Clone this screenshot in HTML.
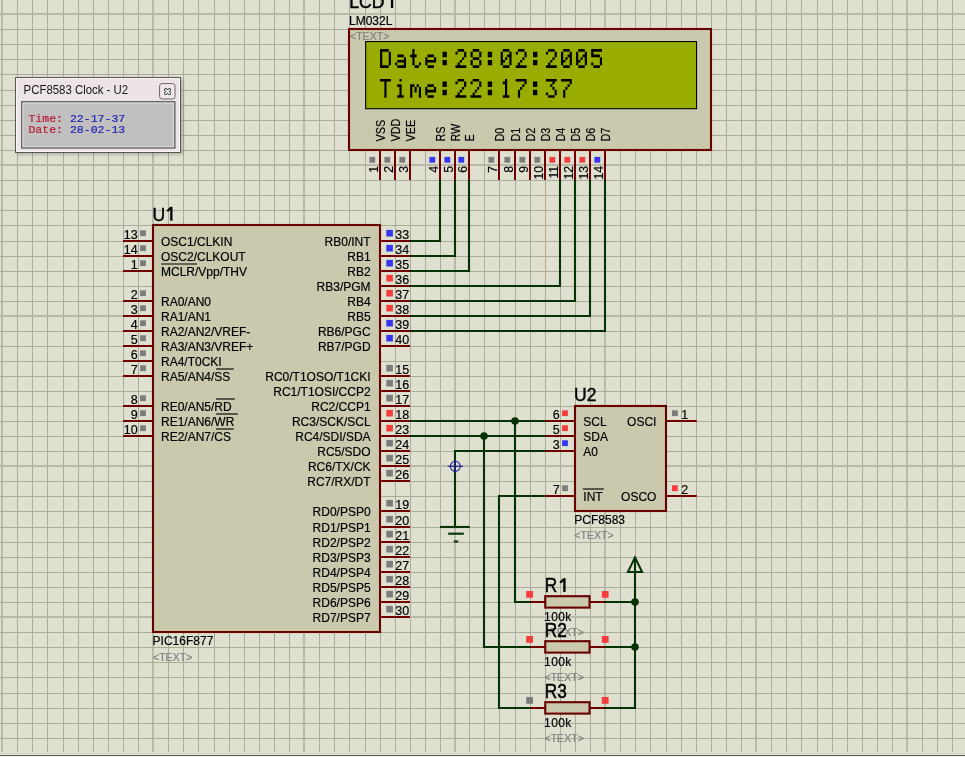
<!DOCTYPE html>
<html><head><meta charset="utf-8"><style>
html,body{margin:0;padding:0;width:965px;height:757px;overflow:hidden;background:#dfe0cf;font-family:"Liberation Sans",sans-serif;}
svg{position:absolute;left:0;top:0;will-change:transform;}
text{font-family:"Liberation Sans",sans-serif;}
</style></head><body>
<svg width="965" height="757" viewBox="0 0 965 757">
<rect x="0" y="0" width="965" height="757" fill="#dfe0cf"/>
<rect x="1" y="0" width="2" height="752" fill="#b8b9a8"/>
<rect x="17" y="0" width="1" height="752" fill="#aaab99"/>
<rect x="32" y="0" width="1" height="752" fill="#aaab99"/>
<rect x="47" y="0" width="1" height="752" fill="#aaab99"/>
<rect x="63" y="0" width="1" height="752" fill="#aaab99"/>
<rect x="78" y="0" width="1" height="752" fill="#aaab99"/>
<rect x="93" y="0" width="1" height="752" fill="#aaab99"/>
<rect x="108" y="0" width="1" height="752" fill="#aaab99"/>
<rect x="123" y="0" width="1" height="752" fill="#aaab99"/>
<rect x="138" y="0" width="1" height="752" fill="#aaab99"/>
<rect x="152" y="0" width="2" height="752" fill="#b8b9a8"/>
<rect x="168" y="0" width="1" height="752" fill="#aaab99"/>
<rect x="183" y="0" width="1" height="752" fill="#aaab99"/>
<rect x="198" y="0" width="1" height="752" fill="#aaab99"/>
<rect x="214" y="0" width="1" height="752" fill="#aaab99"/>
<rect x="229" y="0" width="1" height="752" fill="#aaab99"/>
<rect x="244" y="0" width="1" height="752" fill="#aaab99"/>
<rect x="259" y="0" width="1" height="752" fill="#aaab99"/>
<rect x="274" y="0" width="1" height="752" fill="#aaab99"/>
<rect x="289" y="0" width="1" height="752" fill="#aaab99"/>
<rect x="303" y="0" width="2" height="752" fill="#b8b9a8"/>
<rect x="319" y="0" width="1" height="752" fill="#aaab99"/>
<rect x="334" y="0" width="1" height="752" fill="#aaab99"/>
<rect x="349" y="0" width="1" height="752" fill="#aaab99"/>
<rect x="365" y="0" width="1" height="752" fill="#aaab99"/>
<rect x="380" y="0" width="1" height="752" fill="#aaab99"/>
<rect x="395" y="0" width="1" height="752" fill="#aaab99"/>
<rect x="410" y="0" width="1" height="752" fill="#aaab99"/>
<rect x="425" y="0" width="1" height="752" fill="#aaab99"/>
<rect x="440" y="0" width="1" height="752" fill="#aaab99"/>
<rect x="454" y="0" width="2" height="752" fill="#b8b9a8"/>
<rect x="469" y="0" width="1" height="752" fill="#aaab99"/>
<rect x="484" y="0" width="1" height="752" fill="#aaab99"/>
<rect x="499" y="0" width="1" height="752" fill="#aaab99"/>
<rect x="515" y="0" width="1" height="752" fill="#aaab99"/>
<rect x="530" y="0" width="1" height="752" fill="#aaab99"/>
<rect x="545" y="0" width="1" height="752" fill="#aaab99"/>
<rect x="560" y="0" width="1" height="752" fill="#aaab99"/>
<rect x="575" y="0" width="1" height="752" fill="#aaab99"/>
<rect x="590" y="0" width="1" height="752" fill="#aaab99"/>
<rect x="604" y="0" width="2" height="752" fill="#b8b9a8"/>
<rect x="620" y="0" width="1" height="752" fill="#aaab99"/>
<rect x="635" y="0" width="1" height="752" fill="#aaab99"/>
<rect x="650" y="0" width="1" height="752" fill="#aaab99"/>
<rect x="666" y="0" width="1" height="752" fill="#aaab99"/>
<rect x="681" y="0" width="1" height="752" fill="#aaab99"/>
<rect x="696" y="0" width="1" height="752" fill="#aaab99"/>
<rect x="711" y="0" width="1" height="752" fill="#aaab99"/>
<rect x="726" y="0" width="1" height="752" fill="#aaab99"/>
<rect x="741" y="0" width="1" height="752" fill="#aaab99"/>
<rect x="755" y="0" width="2" height="752" fill="#b8b9a8"/>
<rect x="771" y="0" width="1" height="752" fill="#aaab99"/>
<rect x="786" y="0" width="1" height="752" fill="#aaab99"/>
<rect x="801" y="0" width="1" height="752" fill="#aaab99"/>
<rect x="817" y="0" width="1" height="752" fill="#aaab99"/>
<rect x="832" y="0" width="1" height="752" fill="#aaab99"/>
<rect x="847" y="0" width="1" height="752" fill="#aaab99"/>
<rect x="862" y="0" width="1" height="752" fill="#aaab99"/>
<rect x="877" y="0" width="1" height="752" fill="#aaab99"/>
<rect x="892" y="0" width="1" height="752" fill="#aaab99"/>
<rect x="906" y="0" width="2" height="752" fill="#b8b9a8"/>
<rect x="922" y="0" width="1" height="752" fill="#aaab99"/>
<rect x="937" y="0" width="1" height="752" fill="#aaab99"/>
<rect x="952" y="0" width="1" height="752" fill="#aaab99"/>
<rect x="0" y="13" width="965" height="2" fill="#b8b9a8"/>
<rect x="0" y="29" width="965" height="1" fill="#aaab99"/>
<rect x="0" y="44" width="965" height="1" fill="#aaab99"/>
<rect x="0" y="59" width="965" height="1" fill="#aaab99"/>
<rect x="0" y="74" width="965" height="1" fill="#aaab99"/>
<rect x="0" y="90" width="965" height="1" fill="#aaab99"/>
<rect x="0" y="105" width="965" height="1" fill="#aaab99"/>
<rect x="0" y="120" width="965" height="1" fill="#aaab99"/>
<rect x="0" y="135" width="965" height="1" fill="#aaab99"/>
<rect x="0" y="150" width="965" height="1" fill="#aaab99"/>
<rect x="0" y="164" width="965" height="2" fill="#b8b9a8"/>
<rect x="0" y="180" width="965" height="1" fill="#aaab99"/>
<rect x="0" y="195" width="965" height="1" fill="#aaab99"/>
<rect x="0" y="210" width="965" height="1" fill="#aaab99"/>
<rect x="0" y="225" width="965" height="1" fill="#aaab99"/>
<rect x="0" y="241" width="965" height="1" fill="#aaab99"/>
<rect x="0" y="256" width="965" height="1" fill="#aaab99"/>
<rect x="0" y="271" width="965" height="1" fill="#aaab99"/>
<rect x="0" y="286" width="965" height="1" fill="#aaab99"/>
<rect x="0" y="301" width="965" height="1" fill="#aaab99"/>
<rect x="0" y="315" width="965" height="2" fill="#b8b9a8"/>
<rect x="0" y="331" width="965" height="1" fill="#aaab99"/>
<rect x="0" y="346" width="965" height="1" fill="#aaab99"/>
<rect x="0" y="361" width="965" height="1" fill="#aaab99"/>
<rect x="0" y="376" width="965" height="1" fill="#aaab99"/>
<rect x="0" y="391" width="965" height="1" fill="#aaab99"/>
<rect x="0" y="406" width="965" height="1" fill="#aaab99"/>
<rect x="0" y="421" width="965" height="1" fill="#aaab99"/>
<rect x="0" y="436" width="965" height="1" fill="#aaab99"/>
<rect x="0" y="451" width="965" height="1" fill="#aaab99"/>
<rect x="0" y="465" width="965" height="2" fill="#b8b9a8"/>
<rect x="0" y="481" width="965" height="1" fill="#aaab99"/>
<rect x="0" y="496" width="965" height="1" fill="#aaab99"/>
<rect x="0" y="511" width="965" height="1" fill="#aaab99"/>
<rect x="0" y="527" width="965" height="1" fill="#aaab99"/>
<rect x="0" y="542" width="965" height="1" fill="#aaab99"/>
<rect x="0" y="557" width="965" height="1" fill="#aaab99"/>
<rect x="0" y="572" width="965" height="1" fill="#aaab99"/>
<rect x="0" y="587" width="965" height="1" fill="#aaab99"/>
<rect x="0" y="602" width="965" height="1" fill="#aaab99"/>
<rect x="0" y="616" width="965" height="2" fill="#b8b9a8"/>
<rect x="0" y="632" width="965" height="1" fill="#aaab99"/>
<rect x="0" y="647" width="965" height="1" fill="#aaab99"/>
<rect x="0" y="662" width="965" height="1" fill="#aaab99"/>
<rect x="0" y="677" width="965" height="1" fill="#aaab99"/>
<rect x="0" y="693" width="965" height="1" fill="#aaab99"/>
<rect x="0" y="708" width="965" height="1" fill="#aaab99"/>
<rect x="0" y="723" width="965" height="1" fill="#aaab99"/>
<rect x="0" y="738" width="965" height="1" fill="#aaab99"/>
<text transform="translate(349.3,7.9)" font-size="17.6" fill="#000" text-anchor="start" stroke="#000" stroke-width="0.45">LCD</text>
<path d="M390.9 -6h2.3v13.9h-2.3z" fill="#000"/><line x1="391.4" y1="-4.4" x2="388.6" y2="-1.2" stroke="#000" stroke-width="2"/>
<text transform="translate(349,24.7)" font-size="12" fill="#000" text-anchor="start" stroke="#000" stroke-width="0.18">LM032L</text>
<rect x="349" y="29" width="362" height="121" fill="#cac9ad" stroke="#680000" stroke-width="2.1"/>
<text transform="translate(350,39.8) scale(0.92,1)" font-size="11.5" fill="#7f7f7f" text-anchor="start" stroke="#7f7f7f" stroke-width="0.18">&lt;TEXT&gt;</text>
<rect x="365.65" y="41.6" width="330.9" height="67.1" fill="#98ad00" stroke="#000" stroke-width="1.1"/>
<path fill="#000" d="M380.06 49.06h8.68v2.71h-8.68zM380.06 51.77h2.17v2.71h-2.17zM388.74 51.77h2.17v2.71h-2.17zM380.06 54.48h2.17v2.71h-2.17zM388.74 54.48h2.17v2.71h-2.17zM380.06 57.19h2.17v2.71h-2.17zM388.74 57.19h2.17v2.71h-2.17zM380.06 59.9h2.17v2.71h-2.17zM388.74 59.9h2.17v2.71h-2.17zM380.06 62.61h2.17v2.71h-2.17zM388.74 62.61h2.17v2.71h-2.17zM380.06 65.32h8.68v2.71h-8.68zM397.31 54.48h6.51v2.71h-6.51zM403.82 57.19h2.17v2.71h-2.17zM397.31 59.9h8.68v2.71h-8.68zM395.14 62.61h2.17v2.71h-2.17zM403.82 62.61h2.17v2.71h-2.17zM397.31 65.32h8.68v2.71h-8.68zM412.39 49.06h2.17v2.71h-2.17zM412.39 51.77h2.17v2.71h-2.17zM410.22 54.48h6.51v2.71h-6.51zM412.39 57.19h2.17v2.71h-2.17zM412.39 59.9h2.17v2.71h-2.17zM412.39 62.61h2.17v2.71h-2.17zM418.9 62.61h2.17v2.71h-2.17zM414.56 65.32h4.34v2.71h-4.34zM427.47 54.48h6.51v2.71h-6.51zM425.3 57.19h2.17v2.71h-2.17zM433.98 57.19h2.17v2.71h-2.17zM425.3 59.9h10.85v2.71h-10.85zM425.3 62.61h2.17v2.71h-2.17zM427.47 65.32h6.51v2.71h-6.51zM442.55 51.77h4.34v2.71h-4.34zM442.55 54.48h4.34v2.71h-4.34zM442.55 59.9h4.34v2.71h-4.34zM442.55 62.61h4.34v2.71h-4.34zM457.63 49.06h6.51v2.71h-6.51zM455.46 51.77h2.17v2.71h-2.17zM464.14 51.77h2.17v2.71h-2.17zM464.14 54.48h2.17v2.71h-2.17zM461.97 57.19h2.17v2.71h-2.17zM459.8 59.9h2.17v2.71h-2.17zM457.63 62.61h2.17v2.71h-2.17zM455.46 65.32h10.85v2.71h-10.85zM472.71 49.06h6.51v2.71h-6.51zM470.54 51.77h2.17v2.71h-2.17zM479.22 51.77h2.17v2.71h-2.17zM470.54 54.48h2.17v2.71h-2.17zM479.22 54.48h2.17v2.71h-2.17zM472.71 57.19h6.51v2.71h-6.51zM470.54 59.9h2.17v2.71h-2.17zM479.22 59.9h2.17v2.71h-2.17zM470.54 62.61h2.17v2.71h-2.17zM479.22 62.61h2.17v2.71h-2.17zM472.71 65.32h6.51v2.71h-6.51zM487.79 51.77h4.34v2.71h-4.34zM487.79 54.48h4.34v2.71h-4.34zM487.79 59.9h4.34v2.71h-4.34zM487.79 62.61h4.34v2.71h-4.34zM502.87 49.06h6.51v2.71h-6.51zM500.7 51.77h2.17v2.71h-2.17zM509.38 51.77h2.17v2.71h-2.17zM500.7 54.48h2.17v2.71h-2.17zM507.21 54.48h4.34v2.71h-4.34zM500.7 57.19h2.17v2.71h-2.17zM505.04 57.19h2.17v2.71h-2.17zM509.38 57.19h2.17v2.71h-2.17zM500.7 59.9h4.34v2.71h-4.34zM509.38 59.9h2.17v2.71h-2.17zM500.7 62.61h2.17v2.71h-2.17zM509.38 62.61h2.17v2.71h-2.17zM502.87 65.32h6.51v2.71h-6.51zM517.95 49.06h6.51v2.71h-6.51zM515.78 51.77h2.17v2.71h-2.17zM524.46 51.77h2.17v2.71h-2.17zM524.46 54.48h2.17v2.71h-2.17zM522.29 57.19h2.17v2.71h-2.17zM520.12 59.9h2.17v2.71h-2.17zM517.95 62.61h2.17v2.71h-2.17zM515.78 65.32h10.85v2.71h-10.85zM533.03 51.77h4.34v2.71h-4.34zM533.03 54.48h4.34v2.71h-4.34zM533.03 59.9h4.34v2.71h-4.34zM533.03 62.61h4.34v2.71h-4.34zM548.11 49.06h6.51v2.71h-6.51zM545.94 51.77h2.17v2.71h-2.17zM554.62 51.77h2.17v2.71h-2.17zM554.62 54.48h2.17v2.71h-2.17zM552.45 57.19h2.17v2.71h-2.17zM550.28 59.9h2.17v2.71h-2.17zM548.11 62.61h2.17v2.71h-2.17zM545.94 65.32h10.85v2.71h-10.85zM563.19 49.06h6.51v2.71h-6.51zM561.02 51.77h2.17v2.71h-2.17zM569.7 51.77h2.17v2.71h-2.17zM561.02 54.48h2.17v2.71h-2.17zM567.53 54.48h4.34v2.71h-4.34zM561.02 57.19h2.17v2.71h-2.17zM565.36 57.19h2.17v2.71h-2.17zM569.7 57.19h2.17v2.71h-2.17zM561.02 59.9h4.34v2.71h-4.34zM569.7 59.9h2.17v2.71h-2.17zM561.02 62.61h2.17v2.71h-2.17zM569.7 62.61h2.17v2.71h-2.17zM563.19 65.32h6.51v2.71h-6.51zM578.27 49.06h6.51v2.71h-6.51zM576.1 51.77h2.17v2.71h-2.17zM584.78 51.77h2.17v2.71h-2.17zM576.1 54.48h2.17v2.71h-2.17zM582.61 54.48h4.34v2.71h-4.34zM576.1 57.19h2.17v2.71h-2.17zM580.44 57.19h2.17v2.71h-2.17zM584.78 57.19h2.17v2.71h-2.17zM576.1 59.9h4.34v2.71h-4.34zM584.78 59.9h2.17v2.71h-2.17zM576.1 62.61h2.17v2.71h-2.17zM584.78 62.61h2.17v2.71h-2.17zM578.27 65.32h6.51v2.71h-6.51zM591.18 49.06h10.85v2.71h-10.85zM591.18 51.77h2.17v2.71h-2.17zM591.18 54.48h8.68v2.71h-8.68zM599.86 57.19h2.17v2.71h-2.17zM599.86 59.9h2.17v2.71h-2.17zM591.18 62.61h2.17v2.71h-2.17zM599.86 62.61h2.17v2.71h-2.17zM593.35 65.32h6.51v2.71h-6.51z"/>
<path fill="#000" d="M380.02 78.9h10.85v2.71h-10.85zM384.36 81.61h2.17v2.71h-2.17zM384.36 84.32h2.17v2.71h-2.17zM384.36 87.03h2.17v2.71h-2.17zM384.36 89.74h2.17v2.71h-2.17zM384.36 92.45h2.17v2.71h-2.17zM384.36 95.16h2.17v2.71h-2.17zM399.44 78.9h2.17v2.71h-2.17zM397.27 84.32h4.34v2.71h-4.34zM399.44 87.03h2.17v2.71h-2.17zM399.44 89.74h2.17v2.71h-2.17zM399.44 92.45h2.17v2.71h-2.17zM397.27 95.16h6.51v2.71h-6.51zM410.18 84.32h4.34v2.71h-4.34zM416.69 84.32h2.17v2.71h-2.17zM410.18 87.03h2.17v2.71h-2.17zM414.52 87.03h2.17v2.71h-2.17zM418.86 87.03h2.17v2.71h-2.17zM410.18 89.74h2.17v2.71h-2.17zM414.52 89.74h2.17v2.71h-2.17zM418.86 89.74h2.17v2.71h-2.17zM410.18 92.45h2.17v2.71h-2.17zM418.86 92.45h2.17v2.71h-2.17zM410.18 95.16h2.17v2.71h-2.17zM418.86 95.16h2.17v2.71h-2.17zM427.43 84.32h6.51v2.71h-6.51zM425.26 87.03h2.17v2.71h-2.17zM433.94 87.03h2.17v2.71h-2.17zM425.26 89.74h10.85v2.71h-10.85zM425.26 92.45h2.17v2.71h-2.17zM427.43 95.16h6.51v2.71h-6.51zM442.51 81.61h4.34v2.71h-4.34zM442.51 84.32h4.34v2.71h-4.34zM442.51 89.74h4.34v2.71h-4.34zM442.51 92.45h4.34v2.71h-4.34zM457.59 78.9h6.51v2.71h-6.51zM455.42 81.61h2.17v2.71h-2.17zM464.1 81.61h2.17v2.71h-2.17zM464.1 84.32h2.17v2.71h-2.17zM461.93 87.03h2.17v2.71h-2.17zM459.76 89.74h2.17v2.71h-2.17zM457.59 92.45h2.17v2.71h-2.17zM455.42 95.16h10.85v2.71h-10.85zM472.67 78.9h6.51v2.71h-6.51zM470.5 81.61h2.17v2.71h-2.17zM479.18 81.61h2.17v2.71h-2.17zM479.18 84.32h2.17v2.71h-2.17zM477.01 87.03h2.17v2.71h-2.17zM474.84 89.74h2.17v2.71h-2.17zM472.67 92.45h2.17v2.71h-2.17zM470.5 95.16h10.85v2.71h-10.85zM487.75 81.61h4.34v2.71h-4.34zM487.75 84.32h4.34v2.71h-4.34zM487.75 89.74h4.34v2.71h-4.34zM487.75 92.45h4.34v2.71h-4.34zM505 78.9h2.17v2.71h-2.17zM502.83 81.61h4.34v2.71h-4.34zM505 84.32h2.17v2.71h-2.17zM505 87.03h2.17v2.71h-2.17zM505 89.74h2.17v2.71h-2.17zM505 92.45h2.17v2.71h-2.17zM502.83 95.16h6.51v2.71h-6.51zM515.74 78.9h10.85v2.71h-10.85zM524.42 81.61h2.17v2.71h-2.17zM522.25 84.32h2.17v2.71h-2.17zM520.08 87.03h2.17v2.71h-2.17zM517.91 89.74h2.17v2.71h-2.17zM517.91 92.45h2.17v2.71h-2.17zM517.91 95.16h2.17v2.71h-2.17zM532.99 81.61h4.34v2.71h-4.34zM532.99 84.32h4.34v2.71h-4.34zM532.99 89.74h4.34v2.71h-4.34zM532.99 92.45h4.34v2.71h-4.34zM545.9 78.9h10.85v2.71h-10.85zM552.41 81.61h2.17v2.71h-2.17zM550.24 84.32h2.17v2.71h-2.17zM552.41 87.03h2.17v2.71h-2.17zM554.58 89.74h2.17v2.71h-2.17zM545.9 92.45h2.17v2.71h-2.17zM554.58 92.45h2.17v2.71h-2.17zM548.07 95.16h6.51v2.71h-6.51zM560.98 78.9h10.85v2.71h-10.85zM569.66 81.61h2.17v2.71h-2.17zM567.49 84.32h2.17v2.71h-2.17zM565.32 87.03h2.17v2.71h-2.17zM563.15 89.74h2.17v2.71h-2.17zM563.15 92.45h2.17v2.71h-2.17zM563.15 95.16h2.17v2.71h-2.17z"/>
<line x1="380" y1="150" x2="380" y2="180" stroke="#700000" stroke-width="2"/>
<text transform="translate(385,141.5) rotate(-90) scale(0.9,1)" font-size="12" fill="#000" text-anchor="start" stroke="#000" stroke-width="0.18">VSS</text>
<text transform="translate(378.2,165.8) rotate(-90)" font-size="12.3" fill="#000" text-anchor="end" stroke="#000" stroke-width="0.18">1</text>
<rect x="369.4" y="156.9" width="5.8" height="5.8" fill="#7c7c7c"/>
<line x1="395" y1="150" x2="395" y2="180" stroke="#700000" stroke-width="2"/>
<text transform="translate(400,141.5) rotate(-90) scale(0.9,1)" font-size="12" fill="#000" text-anchor="start" stroke="#000" stroke-width="0.18">VDD</text>
<text transform="translate(393.2,165.8) rotate(-90)" font-size="12.3" fill="#000" text-anchor="end" stroke="#000" stroke-width="0.18">2</text>
<rect x="384.4" y="156.9" width="5.8" height="5.8" fill="#7c7c7c"/>
<line x1="410" y1="150" x2="410" y2="180" stroke="#700000" stroke-width="2"/>
<text transform="translate(415,141.5) rotate(-90) scale(0.9,1)" font-size="12" fill="#000" text-anchor="start" stroke="#000" stroke-width="0.18">VEE</text>
<text transform="translate(408.2,165.8) rotate(-90)" font-size="12.3" fill="#000" text-anchor="end" stroke="#000" stroke-width="0.18">3</text>
<rect x="399.4" y="156.9" width="5.8" height="5.8" fill="#7c7c7c"/>
<line x1="440" y1="150" x2="440" y2="180" stroke="#700000" stroke-width="2"/>
<text transform="translate(445,141.5) rotate(-90) scale(0.9,1)" font-size="12" fill="#000" text-anchor="start" stroke="#000" stroke-width="0.18">RS</text>
<text transform="translate(438.2,165.8) rotate(-90)" font-size="12.3" fill="#000" text-anchor="end" stroke="#000" stroke-width="0.18">4</text>
<rect x="429.4" y="156.9" width="5.8" height="5.8" fill="#3636f0"/>
<line x1="455" y1="150" x2="455" y2="180" stroke="#700000" stroke-width="2"/>
<text transform="translate(460,141.5) rotate(-90) scale(0.9,1)" font-size="12" fill="#000" text-anchor="start" stroke="#000" stroke-width="0.18">RW</text>
<text transform="translate(453.2,165.8) rotate(-90)" font-size="12.3" fill="#000" text-anchor="end" stroke="#000" stroke-width="0.18">5</text>
<rect x="444.4" y="156.9" width="5.8" height="5.8" fill="#3636f0"/>
<line x1="469" y1="150" x2="469" y2="180" stroke="#700000" stroke-width="2"/>
<text transform="translate(474,141.5) rotate(-90) scale(0.9,1)" font-size="12" fill="#000" text-anchor="start" stroke="#000" stroke-width="0.18">E</text>
<text transform="translate(467.2,165.8) rotate(-90)" font-size="12.3" fill="#000" text-anchor="end" stroke="#000" stroke-width="0.18">6</text>
<rect x="458.4" y="156.9" width="5.8" height="5.8" fill="#3636f0"/>
<line x1="499" y1="150" x2="499" y2="180" stroke="#700000" stroke-width="2"/>
<text transform="translate(504,141.5) rotate(-90) scale(0.9,1)" font-size="12" fill="#000" text-anchor="start" stroke="#000" stroke-width="0.18">D0</text>
<text transform="translate(497.2,165.8) rotate(-90)" font-size="12.3" fill="#000" text-anchor="end" stroke="#000" stroke-width="0.18">7</text>
<rect x="488.4" y="156.9" width="5.8" height="5.8" fill="#7c7c7c"/>
<line x1="515" y1="150" x2="515" y2="180" stroke="#700000" stroke-width="2"/>
<text transform="translate(520,141.5) rotate(-90) scale(0.9,1)" font-size="12" fill="#000" text-anchor="start" stroke="#000" stroke-width="0.18">D1</text>
<text transform="translate(513.2,165.8) rotate(-90)" font-size="12.3" fill="#000" text-anchor="end" stroke="#000" stroke-width="0.18">8</text>
<rect x="504.4" y="156.9" width="5.8" height="5.8" fill="#7c7c7c"/>
<line x1="530" y1="150" x2="530" y2="180" stroke="#700000" stroke-width="2"/>
<text transform="translate(535,141.5) rotate(-90) scale(0.9,1)" font-size="12" fill="#000" text-anchor="start" stroke="#000" stroke-width="0.18">D2</text>
<text transform="translate(528.2,165.8) rotate(-90)" font-size="12.3" fill="#000" text-anchor="end" stroke="#000" stroke-width="0.18">9</text>
<rect x="519.4" y="156.9" width="5.8" height="5.8" fill="#7c7c7c"/>
<line x1="545" y1="150" x2="545" y2="180" stroke="#700000" stroke-width="2"/>
<text transform="translate(550,141.5) rotate(-90) scale(0.9,1)" font-size="12" fill="#000" text-anchor="start" stroke="#000" stroke-width="0.18">D3</text>
<text transform="translate(543.2,165.8) rotate(-90)" font-size="12.3" fill="#000" text-anchor="end" stroke="#000" stroke-width="0.18">10</text>
<rect x="534.4" y="156.9" width="5.8" height="5.8" fill="#7c7c7c"/>
<line x1="560" y1="150" x2="560" y2="180" stroke="#700000" stroke-width="2"/>
<text transform="translate(565,141.5) rotate(-90) scale(0.9,1)" font-size="12" fill="#000" text-anchor="start" stroke="#000" stroke-width="0.18">D4</text>
<text transform="translate(558.2,165.8) rotate(-90)" font-size="12.3" fill="#000" text-anchor="end" stroke="#000" stroke-width="0.18">11</text>
<rect x="549.4" y="156.9" width="5.8" height="5.8" fill="#f43c3c"/>
<line x1="575" y1="150" x2="575" y2="180" stroke="#700000" stroke-width="2"/>
<text transform="translate(580,141.5) rotate(-90) scale(0.9,1)" font-size="12" fill="#000" text-anchor="start" stroke="#000" stroke-width="0.18">D5</text>
<text transform="translate(573.2,165.8) rotate(-90)" font-size="12.3" fill="#000" text-anchor="end" stroke="#000" stroke-width="0.18">12</text>
<rect x="564.4" y="156.9" width="5.8" height="5.8" fill="#f43c3c"/>
<line x1="590" y1="150" x2="590" y2="180" stroke="#700000" stroke-width="2"/>
<text transform="translate(595,141.5) rotate(-90) scale(0.9,1)" font-size="12" fill="#000" text-anchor="start" stroke="#000" stroke-width="0.18">D6</text>
<text transform="translate(588.2,165.8) rotate(-90)" font-size="12.3" fill="#000" text-anchor="end" stroke="#000" stroke-width="0.18">13</text>
<rect x="579.4" y="156.9" width="5.8" height="5.8" fill="#f43c3c"/>
<line x1="605" y1="150" x2="605" y2="180" stroke="#700000" stroke-width="2"/>
<text transform="translate(610,141.5) rotate(-90) scale(0.9,1)" font-size="12" fill="#000" text-anchor="start" stroke="#000" stroke-width="0.18">D7</text>
<text transform="translate(603.2,165.8) rotate(-90)" font-size="12.3" fill="#000" text-anchor="end" stroke="#000" stroke-width="0.18">14</text>
<rect x="594.4" y="156.9" width="5.8" height="5.8" fill="#3636f0"/>
<text transform="translate(152.6,220.7) scale(0.95,1)" font-size="18.5" fill="#000" text-anchor="start" stroke="#000" stroke-width="0.4">U</text>
<path d="M170.2 206.8h2.3v13.9h-2.3z" fill="#000"/><line x1="170.7" y1="207.7" x2="167.3" y2="211.3" stroke="#000" stroke-width="2"/>
<rect x="153" y="225" width="227" height="407" fill="#cac9ad" stroke="#680000" stroke-width="2.1"/>
<line x1="123" y1="241" x2="153" y2="241" stroke="#700000" stroke-width="2"/>
<text transform="translate(161,245.9)" font-size="12" fill="#000" text-anchor="start" stroke="#000" stroke-width="0.18">OSC1/CLKIN</text>
<text transform="translate(137.7,239)" font-size="12.5" fill="#000" text-anchor="end" stroke="#000" stroke-width="0.18">13</text>
<rect x="140.1" y="230.3" width="5.8" height="5.8" fill="#7c7c7c"/>
<line x1="123" y1="256" x2="153" y2="256" stroke="#700000" stroke-width="2"/>
<text transform="translate(161,260.9)" font-size="12" fill="#000" text-anchor="start" stroke="#000" stroke-width="0.18">OSC2/CLKOUT</text>
<text transform="translate(137.7,254)" font-size="12.5" fill="#000" text-anchor="end" stroke="#000" stroke-width="0.18">14</text>
<rect x="140.1" y="245.3" width="5.8" height="5.8" fill="#7c7c7c"/>
<line x1="123" y1="271" x2="153" y2="271" stroke="#700000" stroke-width="2"/>
<text transform="translate(161,275.9)" font-size="12" fill="#000" text-anchor="start" stroke="#000" stroke-width="0.18">MCLR/Vpp/THV</text>
<text transform="translate(137.7,269)" font-size="12.5" fill="#000" text-anchor="end" stroke="#000" stroke-width="0.18">1</text>
<rect x="140.1" y="260.3" width="5.8" height="5.8" fill="#7c7c7c"/>
<line x1="123" y1="301" x2="153" y2="301" stroke="#700000" stroke-width="2"/>
<text transform="translate(161,305.9)" font-size="12" fill="#000" text-anchor="start" stroke="#000" stroke-width="0.18">RA0/AN0</text>
<text transform="translate(137.7,299)" font-size="12.5" fill="#000" text-anchor="end" stroke="#000" stroke-width="0.18">2</text>
<rect x="140.1" y="290.3" width="5.8" height="5.8" fill="#7c7c7c"/>
<line x1="123" y1="316" x2="153" y2="316" stroke="#700000" stroke-width="2"/>
<text transform="translate(161,320.9)" font-size="12" fill="#000" text-anchor="start" stroke="#000" stroke-width="0.18">RA1/AN1</text>
<text transform="translate(137.7,314)" font-size="12.5" fill="#000" text-anchor="end" stroke="#000" stroke-width="0.18">3</text>
<rect x="140.1" y="305.3" width="5.8" height="5.8" fill="#7c7c7c"/>
<line x1="123" y1="331" x2="153" y2="331" stroke="#700000" stroke-width="2"/>
<text transform="translate(161,335.9)" font-size="12" fill="#000" text-anchor="start" stroke="#000" stroke-width="0.18">RA2/AN2/VREF-</text>
<text transform="translate(137.7,329)" font-size="12.5" fill="#000" text-anchor="end" stroke="#000" stroke-width="0.18">4</text>
<rect x="140.1" y="320.3" width="5.8" height="5.8" fill="#7c7c7c"/>
<line x1="123" y1="346" x2="153" y2="346" stroke="#700000" stroke-width="2"/>
<text transform="translate(161,350.9)" font-size="12" fill="#000" text-anchor="start" stroke="#000" stroke-width="0.18">RA3/AN3/VREF+</text>
<text transform="translate(137.7,344)" font-size="12.5" fill="#000" text-anchor="end" stroke="#000" stroke-width="0.18">5</text>
<rect x="140.1" y="335.3" width="5.8" height="5.8" fill="#7c7c7c"/>
<line x1="123" y1="361" x2="153" y2="361" stroke="#700000" stroke-width="2"/>
<text transform="translate(161,365.9)" font-size="12" fill="#000" text-anchor="start" stroke="#000" stroke-width="0.18">RA4/T0CKI</text>
<text transform="translate(137.7,359)" font-size="12.5" fill="#000" text-anchor="end" stroke="#000" stroke-width="0.18">6</text>
<rect x="140.1" y="350.3" width="5.8" height="5.8" fill="#7c7c7c"/>
<line x1="123" y1="376" x2="153" y2="376" stroke="#700000" stroke-width="2"/>
<text transform="translate(161,380.9)" font-size="12" fill="#000" text-anchor="start" stroke="#000" stroke-width="0.18">RA5/AN4/SS</text>
<text transform="translate(137.7,374)" font-size="12.5" fill="#000" text-anchor="end" stroke="#000" stroke-width="0.18">7</text>
<rect x="140.1" y="365.3" width="5.8" height="5.8" fill="#7c7c7c"/>
<line x1="123" y1="406" x2="153" y2="406" stroke="#700000" stroke-width="2"/>
<text transform="translate(161,410.9)" font-size="12" fill="#000" text-anchor="start" stroke="#000" stroke-width="0.18">RE0/AN5/RD</text>
<text transform="translate(137.7,404)" font-size="12.5" fill="#000" text-anchor="end" stroke="#000" stroke-width="0.18">8</text>
<rect x="140.1" y="395.3" width="5.8" height="5.8" fill="#7c7c7c"/>
<line x1="123" y1="421" x2="153" y2="421" stroke="#700000" stroke-width="2"/>
<text transform="translate(161,425.9)" font-size="12" fill="#000" text-anchor="start" stroke="#000" stroke-width="0.18">RE1/AN6/WR</text>
<text transform="translate(137.7,419)" font-size="12.5" fill="#000" text-anchor="end" stroke="#000" stroke-width="0.18">9</text>
<rect x="140.1" y="410.3" width="5.8" height="5.8" fill="#7c7c7c"/>
<line x1="123" y1="436" x2="153" y2="436" stroke="#700000" stroke-width="2"/>
<text transform="translate(161,440.9)" font-size="12" fill="#000" text-anchor="start" stroke="#000" stroke-width="0.18">RE2/AN7/CS</text>
<text transform="translate(137.7,434)" font-size="12.5" fill="#000" text-anchor="end" stroke="#000" stroke-width="0.18">10</text>
<rect x="140.1" y="425.3" width="5.8" height="5.8" fill="#7c7c7c"/>
<line x1="380" y1="241" x2="410" y2="241" stroke="#700000" stroke-width="2"/>
<text transform="translate(370.6,245.9)" font-size="12" fill="#000" text-anchor="end" stroke="#000" stroke-width="0.18">RB0/INT</text>
<text transform="translate(395.3,239)" font-size="12.5" fill="#000" text-anchor="start" stroke="#000" stroke-width="0.18">33</text>
<rect x="386.3" y="229.9" width="6.6" height="6.6" fill="#3636f0"/>
<line x1="380" y1="256" x2="410" y2="256" stroke="#700000" stroke-width="2"/>
<text transform="translate(370.6,260.9)" font-size="12" fill="#000" text-anchor="end" stroke="#000" stroke-width="0.18">RB1</text>
<text transform="translate(395.3,254)" font-size="12.5" fill="#000" text-anchor="start" stroke="#000" stroke-width="0.18">34</text>
<rect x="386.3" y="244.9" width="6.6" height="6.6" fill="#3636f0"/>
<line x1="380" y1="271" x2="410" y2="271" stroke="#700000" stroke-width="2"/>
<text transform="translate(370.6,275.9)" font-size="12" fill="#000" text-anchor="end" stroke="#000" stroke-width="0.18">RB2</text>
<text transform="translate(395.3,269)" font-size="12.5" fill="#000" text-anchor="start" stroke="#000" stroke-width="0.18">35</text>
<rect x="386.3" y="259.9" width="6.6" height="6.6" fill="#3636f0"/>
<line x1="380" y1="286" x2="410" y2="286" stroke="#700000" stroke-width="2"/>
<text transform="translate(370.6,290.9)" font-size="12" fill="#000" text-anchor="end" stroke="#000" stroke-width="0.18">RB3/PGM</text>
<text transform="translate(395.3,284)" font-size="12.5" fill="#000" text-anchor="start" stroke="#000" stroke-width="0.18">36</text>
<rect x="386.3" y="274.9" width="6.6" height="6.6" fill="#f43c3c"/>
<line x1="380" y1="301" x2="410" y2="301" stroke="#700000" stroke-width="2"/>
<text transform="translate(370.6,305.9)" font-size="12" fill="#000" text-anchor="end" stroke="#000" stroke-width="0.18">RB4</text>
<text transform="translate(395.3,299)" font-size="12.5" fill="#000" text-anchor="start" stroke="#000" stroke-width="0.18">37</text>
<rect x="386.3" y="289.9" width="6.6" height="6.6" fill="#f43c3c"/>
<line x1="380" y1="316" x2="410" y2="316" stroke="#700000" stroke-width="2"/>
<text transform="translate(370.6,320.9)" font-size="12" fill="#000" text-anchor="end" stroke="#000" stroke-width="0.18">RB5</text>
<text transform="translate(395.3,314)" font-size="12.5" fill="#000" text-anchor="start" stroke="#000" stroke-width="0.18">38</text>
<rect x="386.3" y="304.9" width="6.6" height="6.6" fill="#f43c3c"/>
<line x1="380" y1="331" x2="410" y2="331" stroke="#700000" stroke-width="2"/>
<text transform="translate(370.6,335.9)" font-size="12" fill="#000" text-anchor="end" stroke="#000" stroke-width="0.18">RB6/PGC</text>
<text transform="translate(395.3,329)" font-size="12.5" fill="#000" text-anchor="start" stroke="#000" stroke-width="0.18">39</text>
<rect x="386.3" y="319.9" width="6.6" height="6.6" fill="#3636f0"/>
<line x1="380" y1="346" x2="410" y2="346" stroke="#700000" stroke-width="2"/>
<text transform="translate(370.6,350.9)" font-size="12" fill="#000" text-anchor="end" stroke="#000" stroke-width="0.18">RB7/PGD</text>
<text transform="translate(395.3,344)" font-size="12.5" fill="#000" text-anchor="start" stroke="#000" stroke-width="0.18">40</text>
<rect x="386.3" y="334.9" width="6.6" height="6.6" fill="#3636f0"/>
<line x1="380" y1="376" x2="410" y2="376" stroke="#700000" stroke-width="2"/>
<text transform="translate(370.6,380.9)" font-size="12" fill="#000" text-anchor="end" stroke="#000" stroke-width="0.18">RC0/T1OSO/T1CKI</text>
<text transform="translate(395.3,374)" font-size="12.5" fill="#000" text-anchor="start" stroke="#000" stroke-width="0.18">15</text>
<rect x="386.3" y="364.9" width="6.6" height="6.6" fill="#7c7c7c"/>
<line x1="380" y1="391" x2="410" y2="391" stroke="#700000" stroke-width="2"/>
<text transform="translate(370.6,395.9)" font-size="12" fill="#000" text-anchor="end" stroke="#000" stroke-width="0.18">RC1/T1OSI/CCP2</text>
<text transform="translate(395.3,389)" font-size="12.5" fill="#000" text-anchor="start" stroke="#000" stroke-width="0.18">16</text>
<rect x="386.3" y="379.9" width="6.6" height="6.6" fill="#7c7c7c"/>
<line x1="380" y1="406" x2="410" y2="406" stroke="#700000" stroke-width="2"/>
<text transform="translate(370.6,410.9)" font-size="12" fill="#000" text-anchor="end" stroke="#000" stroke-width="0.18">RC2/CCP1</text>
<text transform="translate(395.3,404)" font-size="12.5" fill="#000" text-anchor="start" stroke="#000" stroke-width="0.18">17</text>
<rect x="386.3" y="394.9" width="6.6" height="6.6" fill="#7c7c7c"/>
<line x1="380" y1="421" x2="410" y2="421" stroke="#700000" stroke-width="2"/>
<text transform="translate(370.6,425.9)" font-size="12" fill="#000" text-anchor="end" stroke="#000" stroke-width="0.18">RC3/SCK/SCL</text>
<text transform="translate(395.3,419)" font-size="12.5" fill="#000" text-anchor="start" stroke="#000" stroke-width="0.18">18</text>
<rect x="386.3" y="409.9" width="6.6" height="6.6" fill="#f43c3c"/>
<line x1="380" y1="436" x2="410" y2="436" stroke="#700000" stroke-width="2"/>
<text transform="translate(370.6,440.9)" font-size="12" fill="#000" text-anchor="end" stroke="#000" stroke-width="0.18">RC4/SDI/SDA</text>
<text transform="translate(395.3,434)" font-size="12.5" fill="#000" text-anchor="start" stroke="#000" stroke-width="0.18">23</text>
<rect x="386.3" y="424.9" width="6.6" height="6.6" fill="#f43c3c"/>
<line x1="380" y1="451" x2="410" y2="451" stroke="#700000" stroke-width="2"/>
<text transform="translate(370.6,455.9)" font-size="12" fill="#000" text-anchor="end" stroke="#000" stroke-width="0.18">RC5/SDO</text>
<text transform="translate(395.3,449)" font-size="12.5" fill="#000" text-anchor="start" stroke="#000" stroke-width="0.18">24</text>
<rect x="386.3" y="439.9" width="6.6" height="6.6" fill="#7c7c7c"/>
<line x1="380" y1="466" x2="410" y2="466" stroke="#700000" stroke-width="2"/>
<text transform="translate(370.6,470.9)" font-size="12" fill="#000" text-anchor="end" stroke="#000" stroke-width="0.18">RC6/TX/CK</text>
<text transform="translate(395.3,464)" font-size="12.5" fill="#000" text-anchor="start" stroke="#000" stroke-width="0.18">25</text>
<rect x="386.3" y="454.9" width="6.6" height="6.6" fill="#7c7c7c"/>
<line x1="380" y1="481" x2="410" y2="481" stroke="#700000" stroke-width="2"/>
<text transform="translate(370.6,485.9)" font-size="12" fill="#000" text-anchor="end" stroke="#000" stroke-width="0.18">RC7/RX/DT</text>
<text transform="translate(395.3,479)" font-size="12.5" fill="#000" text-anchor="start" stroke="#000" stroke-width="0.18">26</text>
<rect x="386.3" y="469.9" width="6.6" height="6.6" fill="#7c7c7c"/>
<line x1="380" y1="511" x2="410" y2="511" stroke="#700000" stroke-width="2"/>
<text transform="translate(370.6,515.9)" font-size="12" fill="#000" text-anchor="end" stroke="#000" stroke-width="0.18">RD0/PSP0</text>
<text transform="translate(395.3,509)" font-size="12.5" fill="#000" text-anchor="start" stroke="#000" stroke-width="0.18">19</text>
<rect x="386.3" y="499.9" width="6.6" height="6.6" fill="#7c7c7c"/>
<line x1="380" y1="527" x2="410" y2="527" stroke="#700000" stroke-width="2"/>
<text transform="translate(370.6,531.9)" font-size="12" fill="#000" text-anchor="end" stroke="#000" stroke-width="0.18">RD1/PSP1</text>
<text transform="translate(395.3,525)" font-size="12.5" fill="#000" text-anchor="start" stroke="#000" stroke-width="0.18">20</text>
<rect x="386.3" y="515.9" width="6.6" height="6.6" fill="#7c7c7c"/>
<line x1="380" y1="542" x2="410" y2="542" stroke="#700000" stroke-width="2"/>
<text transform="translate(370.6,546.9)" font-size="12" fill="#000" text-anchor="end" stroke="#000" stroke-width="0.18">RD2/PSP2</text>
<text transform="translate(395.3,540)" font-size="12.5" fill="#000" text-anchor="start" stroke="#000" stroke-width="0.18">21</text>
<rect x="386.3" y="530.9" width="6.6" height="6.6" fill="#7c7c7c"/>
<line x1="380" y1="557" x2="410" y2="557" stroke="#700000" stroke-width="2"/>
<text transform="translate(370.6,561.9)" font-size="12" fill="#000" text-anchor="end" stroke="#000" stroke-width="0.18">RD3/PSP3</text>
<text transform="translate(395.3,555)" font-size="12.5" fill="#000" text-anchor="start" stroke="#000" stroke-width="0.18">22</text>
<rect x="386.3" y="545.9" width="6.6" height="6.6" fill="#7c7c7c"/>
<line x1="380" y1="572" x2="410" y2="572" stroke="#700000" stroke-width="2"/>
<text transform="translate(370.6,576.9)" font-size="12" fill="#000" text-anchor="end" stroke="#000" stroke-width="0.18">RD4/PSP4</text>
<text transform="translate(395.3,570)" font-size="12.5" fill="#000" text-anchor="start" stroke="#000" stroke-width="0.18">27</text>
<rect x="386.3" y="560.9" width="6.6" height="6.6" fill="#7c7c7c"/>
<line x1="380" y1="587" x2="410" y2="587" stroke="#700000" stroke-width="2"/>
<text transform="translate(370.6,591.9)" font-size="12" fill="#000" text-anchor="end" stroke="#000" stroke-width="0.18">RD5/PSP5</text>
<text transform="translate(395.3,585)" font-size="12.5" fill="#000" text-anchor="start" stroke="#000" stroke-width="0.18">28</text>
<rect x="386.3" y="575.9" width="6.6" height="6.6" fill="#7c7c7c"/>
<line x1="380" y1="602" x2="410" y2="602" stroke="#700000" stroke-width="2"/>
<text transform="translate(370.6,606.9)" font-size="12" fill="#000" text-anchor="end" stroke="#000" stroke-width="0.18">RD6/PSP6</text>
<text transform="translate(395.3,600)" font-size="12.5" fill="#000" text-anchor="start" stroke="#000" stroke-width="0.18">29</text>
<rect x="386.3" y="590.9" width="6.6" height="6.6" fill="#7c7c7c"/>
<line x1="380" y1="617" x2="410" y2="617" stroke="#700000" stroke-width="2"/>
<text transform="translate(370.6,621.9)" font-size="12" fill="#000" text-anchor="end" stroke="#000" stroke-width="0.18">RD7/PSP7</text>
<text transform="translate(395.3,615)" font-size="12.5" fill="#000" text-anchor="start" stroke="#000" stroke-width="0.18">30</text>
<rect x="386.3" y="605.9" width="6.6" height="6.6" fill="#7c7c7c"/>
<line x1="161.2" y1="264" x2="197" y2="264" stroke="#000" stroke-width="1.15"/>
<line x1="216.1" y1="369" x2="233.7" y2="369" stroke="#000" stroke-width="1.15"/>
<line x1="216.1" y1="399" x2="234.8" y2="399" stroke="#000" stroke-width="1.15"/>
<line x1="216.1" y1="414" x2="237.9" y2="414" stroke="#000" stroke-width="1.15"/>
<line x1="216.1" y1="429" x2="233.7" y2="429" stroke="#000" stroke-width="1.15"/>
<text transform="translate(152.6,644.9)" font-size="12" fill="#000" text-anchor="start" stroke="#000" stroke-width="0.18">PIC16F877</text>
<text transform="translate(153,661) scale(0.92,1)" font-size="11.5" fill="#7f7f7f" text-anchor="start" stroke="#7f7f7f" stroke-width="0.18">&lt;TEXT&gt;</text>
<text transform="translate(574,400.6) scale(0.95,1)" font-size="18.5" fill="#000" text-anchor="start" stroke="#000" stroke-width="0.4">U2</text>
<rect x="575" y="406" width="91" height="105" fill="#cac9ad" stroke="#680000" stroke-width="2.1"/>
<line x1="545" y1="421" x2="575" y2="421" stroke="#700000" stroke-width="2"/>
<text transform="translate(583.3,425.9)" font-size="12" fill="#000" text-anchor="start" stroke="#000" stroke-width="0.18">SCL</text>
<text transform="translate(559.6,419)" font-size="12.5" fill="#000" text-anchor="end" stroke="#000" stroke-width="0.18">6</text>
<rect x="562.1" y="410.3" width="5.8" height="5.8" fill="#f43c3c"/>
<line x1="545" y1="436" x2="575" y2="436" stroke="#700000" stroke-width="2"/>
<text transform="translate(583.3,440.9)" font-size="12" fill="#000" text-anchor="start" stroke="#000" stroke-width="0.18">SDA</text>
<text transform="translate(559.6,434)" font-size="12.5" fill="#000" text-anchor="end" stroke="#000" stroke-width="0.18">5</text>
<rect x="562.1" y="425.3" width="5.8" height="5.8" fill="#f43c3c"/>
<line x1="545" y1="451" x2="575" y2="451" stroke="#700000" stroke-width="2"/>
<text transform="translate(583.3,455.9)" font-size="12" fill="#000" text-anchor="start" stroke="#000" stroke-width="0.18">A0</text>
<text transform="translate(559.6,449)" font-size="12.5" fill="#000" text-anchor="end" stroke="#000" stroke-width="0.18">3</text>
<rect x="562.1" y="440.3" width="5.8" height="5.8" fill="#3636f0"/>
<line x1="545" y1="496" x2="575" y2="496" stroke="#700000" stroke-width="2"/>
<text transform="translate(583.3,500.9)" font-size="12" fill="#000" text-anchor="start" stroke="#000" stroke-width="0.18">INT</text>
<text transform="translate(559.6,494)" font-size="12.5" fill="#000" text-anchor="end" stroke="#000" stroke-width="0.18">7</text>
<rect x="562.1" y="485.3" width="5.8" height="5.8" fill="#7c7c7c"/>
<line x1="666" y1="421" x2="696.8" y2="421" stroke="#700000" stroke-width="2"/>
<text transform="translate(656.4,425.9)" font-size="12" fill="#000" text-anchor="end" stroke="#000" stroke-width="0.18">OSCI</text>
<text transform="translate(681.3,419)" font-size="12.5" fill="#000" text-anchor="start" stroke="#000" stroke-width="0.18">1</text>
<rect x="672" y="410.3" width="5.8" height="5.8" fill="#7c7c7c"/>
<line x1="666" y1="496" x2="696.8" y2="496" stroke="#700000" stroke-width="2"/>
<text transform="translate(656.4,500.9)" font-size="12" fill="#000" text-anchor="end" stroke="#000" stroke-width="0.18">OSCO</text>
<text transform="translate(681.3,494)" font-size="12.5" fill="#000" text-anchor="start" stroke="#000" stroke-width="0.18">2</text>
<rect x="672" y="485.3" width="5.8" height="5.8" fill="#f43c3c"/>
<line x1="582.9" y1="489" x2="603.8" y2="489" stroke="#000" stroke-width="1.15"/>
<text transform="translate(574.3,524.4)" font-size="12" fill="#000" text-anchor="start" stroke="#000" stroke-width="0.18">PCF8583</text>
<text transform="translate(574.3,539.3) scale(0.92,1)" font-size="11.5" fill="#7f7f7f" text-anchor="start" stroke="#7f7f7f" stroke-width="0.18">&lt;TEXT&gt;</text>
<polyline fill="none" stroke="#033303" stroke-width="2.1" stroke-linejoin="miter" stroke-linecap="square" points="411,241 440,241 440,181"/>
<polyline fill="none" stroke="#033303" stroke-width="2.1" stroke-linejoin="miter" stroke-linecap="square" points="411,256 455,256 455,181"/>
<polyline fill="none" stroke="#033303" stroke-width="2.1" stroke-linejoin="miter" stroke-linecap="square" points="411,271 469,271 469,181"/>
<polyline fill="none" stroke="#033303" stroke-width="2.1" stroke-linejoin="miter" stroke-linecap="square" points="411,286 560,286 560,181"/>
<polyline fill="none" stroke="#033303" stroke-width="2.1" stroke-linejoin="miter" stroke-linecap="square" points="411,301 575,301 575,181"/>
<polyline fill="none" stroke="#033303" stroke-width="2.1" stroke-linejoin="miter" stroke-linecap="square" points="411,316 590,316 590,181"/>
<polyline fill="none" stroke="#033303" stroke-width="2.1" stroke-linejoin="miter" stroke-linecap="square" points="411,331 605,331 605,181"/>
<polyline fill="none" stroke="#033303" stroke-width="2.1" stroke-linejoin="miter" stroke-linecap="square" points="411,421 544,421"/>
<polyline fill="none" stroke="#033303" stroke-width="2.1" stroke-linejoin="miter" stroke-linecap="square" points="411,436 544,436"/>
<polyline fill="none" stroke="#033303" stroke-width="2.1" stroke-linejoin="miter" stroke-linecap="square" points="544,451 455,451 455,527"/>
<polyline fill="none" stroke="#033303" stroke-width="2.1" stroke-linejoin="miter" stroke-linecap="square" points="544,496 499,496 499,708 529,708"/>
<polyline fill="none" stroke="#033303" stroke-width="2.1" stroke-linejoin="miter" stroke-linecap="square" points="515,421 515,602 529,602"/>
<polyline fill="none" stroke="#033303" stroke-width="2.1" stroke-linejoin="miter" stroke-linecap="square" points="484,436 484,647 529,647"/>
<polyline fill="none" stroke="#033303" stroke-width="2.1" stroke-linejoin="miter" stroke-linecap="square" points="606,602 635,602"/>
<polyline fill="none" stroke="#033303" stroke-width="2.1" stroke-linejoin="miter" stroke-linecap="square" points="606,647 635,647"/>
<polyline fill="none" stroke="#033303" stroke-width="2.1" stroke-linejoin="miter" stroke-linecap="square" points="606,708 635,708 635,559"/>
<polygon points="635,557.4 627.9,572 642.1,572" fill="none" stroke="#033303" stroke-width="2"/>
<circle cx="515" cy="421" r="3.8" fill="#033303"/>
<circle cx="484" cy="436" r="3.8" fill="#033303"/>
<circle cx="635" cy="602" r="3.8" fill="#033303"/>
<circle cx="635" cy="647" r="3.8" fill="#033303"/>
<line x1="440" y1="527" x2="469.8" y2="527" stroke="#033303" stroke-width="2.1"/>
<line x1="448.2" y1="533.7" x2="463.8" y2="533.7" stroke="#033303" stroke-width="2.1"/>
<line x1="453.8" y1="541.5" x2="458.2" y2="541.5" stroke="#033303" stroke-width="2.1"/>
<g stroke="#1c1c9c" stroke-width="1.1" fill="none"><circle cx="455.3" cy="466.3" r="5"/><line x1="447.8" y1="466.3" x2="463" y2="466.3"/><line x1="455.3" y1="459.5" x2="455.3" y2="473.5"/></g>
<line x1="530" y1="602" x2="605" y2="602" stroke="#700000" stroke-width="1.9"/>
<rect x="545.25" y="596.2" width="44.3" height="11.4" fill="#cac9ad" stroke="#680000" stroke-width="2.1"/>
<rect x="526.2" y="591" width="6.8" height="6.8" fill="#f43c3c"/>
<rect x="601.8" y="591" width="6.8" height="6.8" fill="#f43c3c"/>
<text transform="translate(544.8,591.9) scale(0.88,1)" font-size="19.6" fill="#000" text-anchor="start" stroke="#000" stroke-width="0.45">R</text>
<path d="M563.2 578.2h2.4v13.7h-2.4z" fill="#000"/><line x1="563.7" y1="579.2" x2="560.2" y2="582.8" stroke="#000" stroke-width="2.1"/>
<text transform="translate(544.1,620.9)" font-size="12" fill="#000" stroke="#000" stroke-width="0.18" textLength="27.2" lengthAdjust="spacing">100k</text>
<text transform="translate(544.5,636.3) scale(0.92,1)" font-size="11.5" fill="#7f7f7f" text-anchor="start" stroke="#7f7f7f" stroke-width="0.18">&lt;TEXT&gt;</text>
<line x1="530" y1="647" x2="605" y2="647" stroke="#700000" stroke-width="1.9"/>
<rect x="545.25" y="641.2" width="44.3" height="11.4" fill="#cac9ad" stroke="#680000" stroke-width="2.1"/>
<rect x="526.2" y="636" width="6.8" height="6.8" fill="#f43c3c"/>
<rect x="601.8" y="636" width="6.8" height="6.8" fill="#f43c3c"/>
<text transform="translate(544.8,636.9) scale(0.88,1)" font-size="19.6" fill="#000" text-anchor="start" stroke="#000" stroke-width="0.45">R2</text>
<text transform="translate(544.1,665.9)" font-size="12" fill="#000" stroke="#000" stroke-width="0.18" textLength="27.2" lengthAdjust="spacing">100k</text>
<text transform="translate(544.5,681.3) scale(0.92,1)" font-size="11.5" fill="#7f7f7f" text-anchor="start" stroke="#7f7f7f" stroke-width="0.18">&lt;TEXT&gt;</text>
<line x1="530" y1="708" x2="605" y2="708" stroke="#700000" stroke-width="1.9"/>
<rect x="545.25" y="702.2" width="44.3" height="11.4" fill="#cac9ad" stroke="#680000" stroke-width="2.1"/>
<rect x="526.2" y="697" width="6.8" height="6.8" fill="#7c7c7c"/>
<rect x="601.8" y="697" width="6.8" height="6.8" fill="#f43c3c"/>
<text transform="translate(544.8,697.9) scale(0.88,1)" font-size="19.6" fill="#000" text-anchor="start" stroke="#000" stroke-width="0.45">R3</text>
<text transform="translate(544.1,726.9)" font-size="12" fill="#000" stroke="#000" stroke-width="0.18" textLength="27.2" lengthAdjust="spacing">100k</text>
<text transform="translate(544.5,742.3) scale(0.92,1)" font-size="11.5" fill="#7f7f7f" text-anchor="start" stroke="#7f7f7f" stroke-width="0.18">&lt;TEXT&gt;</text>
<rect x="0" y="752" width="965" height="3" fill="#e4e5d8"/><rect x="0" y="753" width="965" height="1" fill="#cfd0bf"/>
<rect x="0" y="755" width="965" height="1" fill="#5a5a52"/>
<rect x="0" y="756" width="965" height="1" fill="#ececec"/>
</svg>

<div style="position:absolute;left:17px;top:79px;width:166px;height:76px;background:rgba(0,0,0,0.18);filter:blur(1.5px);"></div>
<div style="position:absolute;left:15px;top:77px;width:166px;height:76px;box-sizing:border-box;background:#ede4e7;border:1px solid #5a5656;">
  <div style="position:absolute;left:0;top:0;right:0;bottom:0;border:1px solid #faf6f7;"></div>
  <svg style="position:absolute;left:-15px;top:-77px;will-change:transform" width="200" height="170">
    <text x="22.6" y="93.3" font-size="12.6" fill="#161616" textLength="104.5" lengthAdjust="spacingAndGlyphs">PCF8583 Clock - U2</text>
    <rect x="158.6" y="82.6" width="15.4" height="15.4" rx="2.5" fill="#efe7ea" stroke="#6c6262" stroke-width="1"/>
    <path d="M164.7 88.7 L168.5 92.4 M168.5 88.7 L164.7 92.4" stroke="#3a3a3a" stroke-width="3.4" stroke-linecap="round"/>
    <path d="M164.7 88.7 L168.5 92.4 M168.5 88.7 L164.7 92.4" stroke="#ffffff" stroke-width="1.5" stroke-linecap="round"/>
    <rect x="20.8" y="100.8" width="153.1" height="46.2" fill="#f4f0f0" stroke="#2e2e2e" stroke-width="1"/>
    <rect x="22.3" y="102.3" width="150.2" height="43.3" fill="#c0c0c0"/>
    <g font-family="Liberation Mono" font-size="11.55" stroke-width="0.2" transform="translate(0,121.0) scale(1,0.9)">
      <text x="27.4" y="0" style="font-family:'Liberation Mono',monospace"><tspan fill="#b81830" stroke="#b81830">Time: </tspan><tspan fill="#2222b0" stroke="#2222b0">22-17-37</tspan></text>
      <text x="27.4" y="12.6" style="font-family:'Liberation Mono',monospace"><tspan fill="#b81830" stroke="#b81830">Date: </tspan><tspan fill="#2222b0" stroke="#2222b0">28-02-13</tspan></text>
    </g>
  </svg>
</div>

</body></html>
